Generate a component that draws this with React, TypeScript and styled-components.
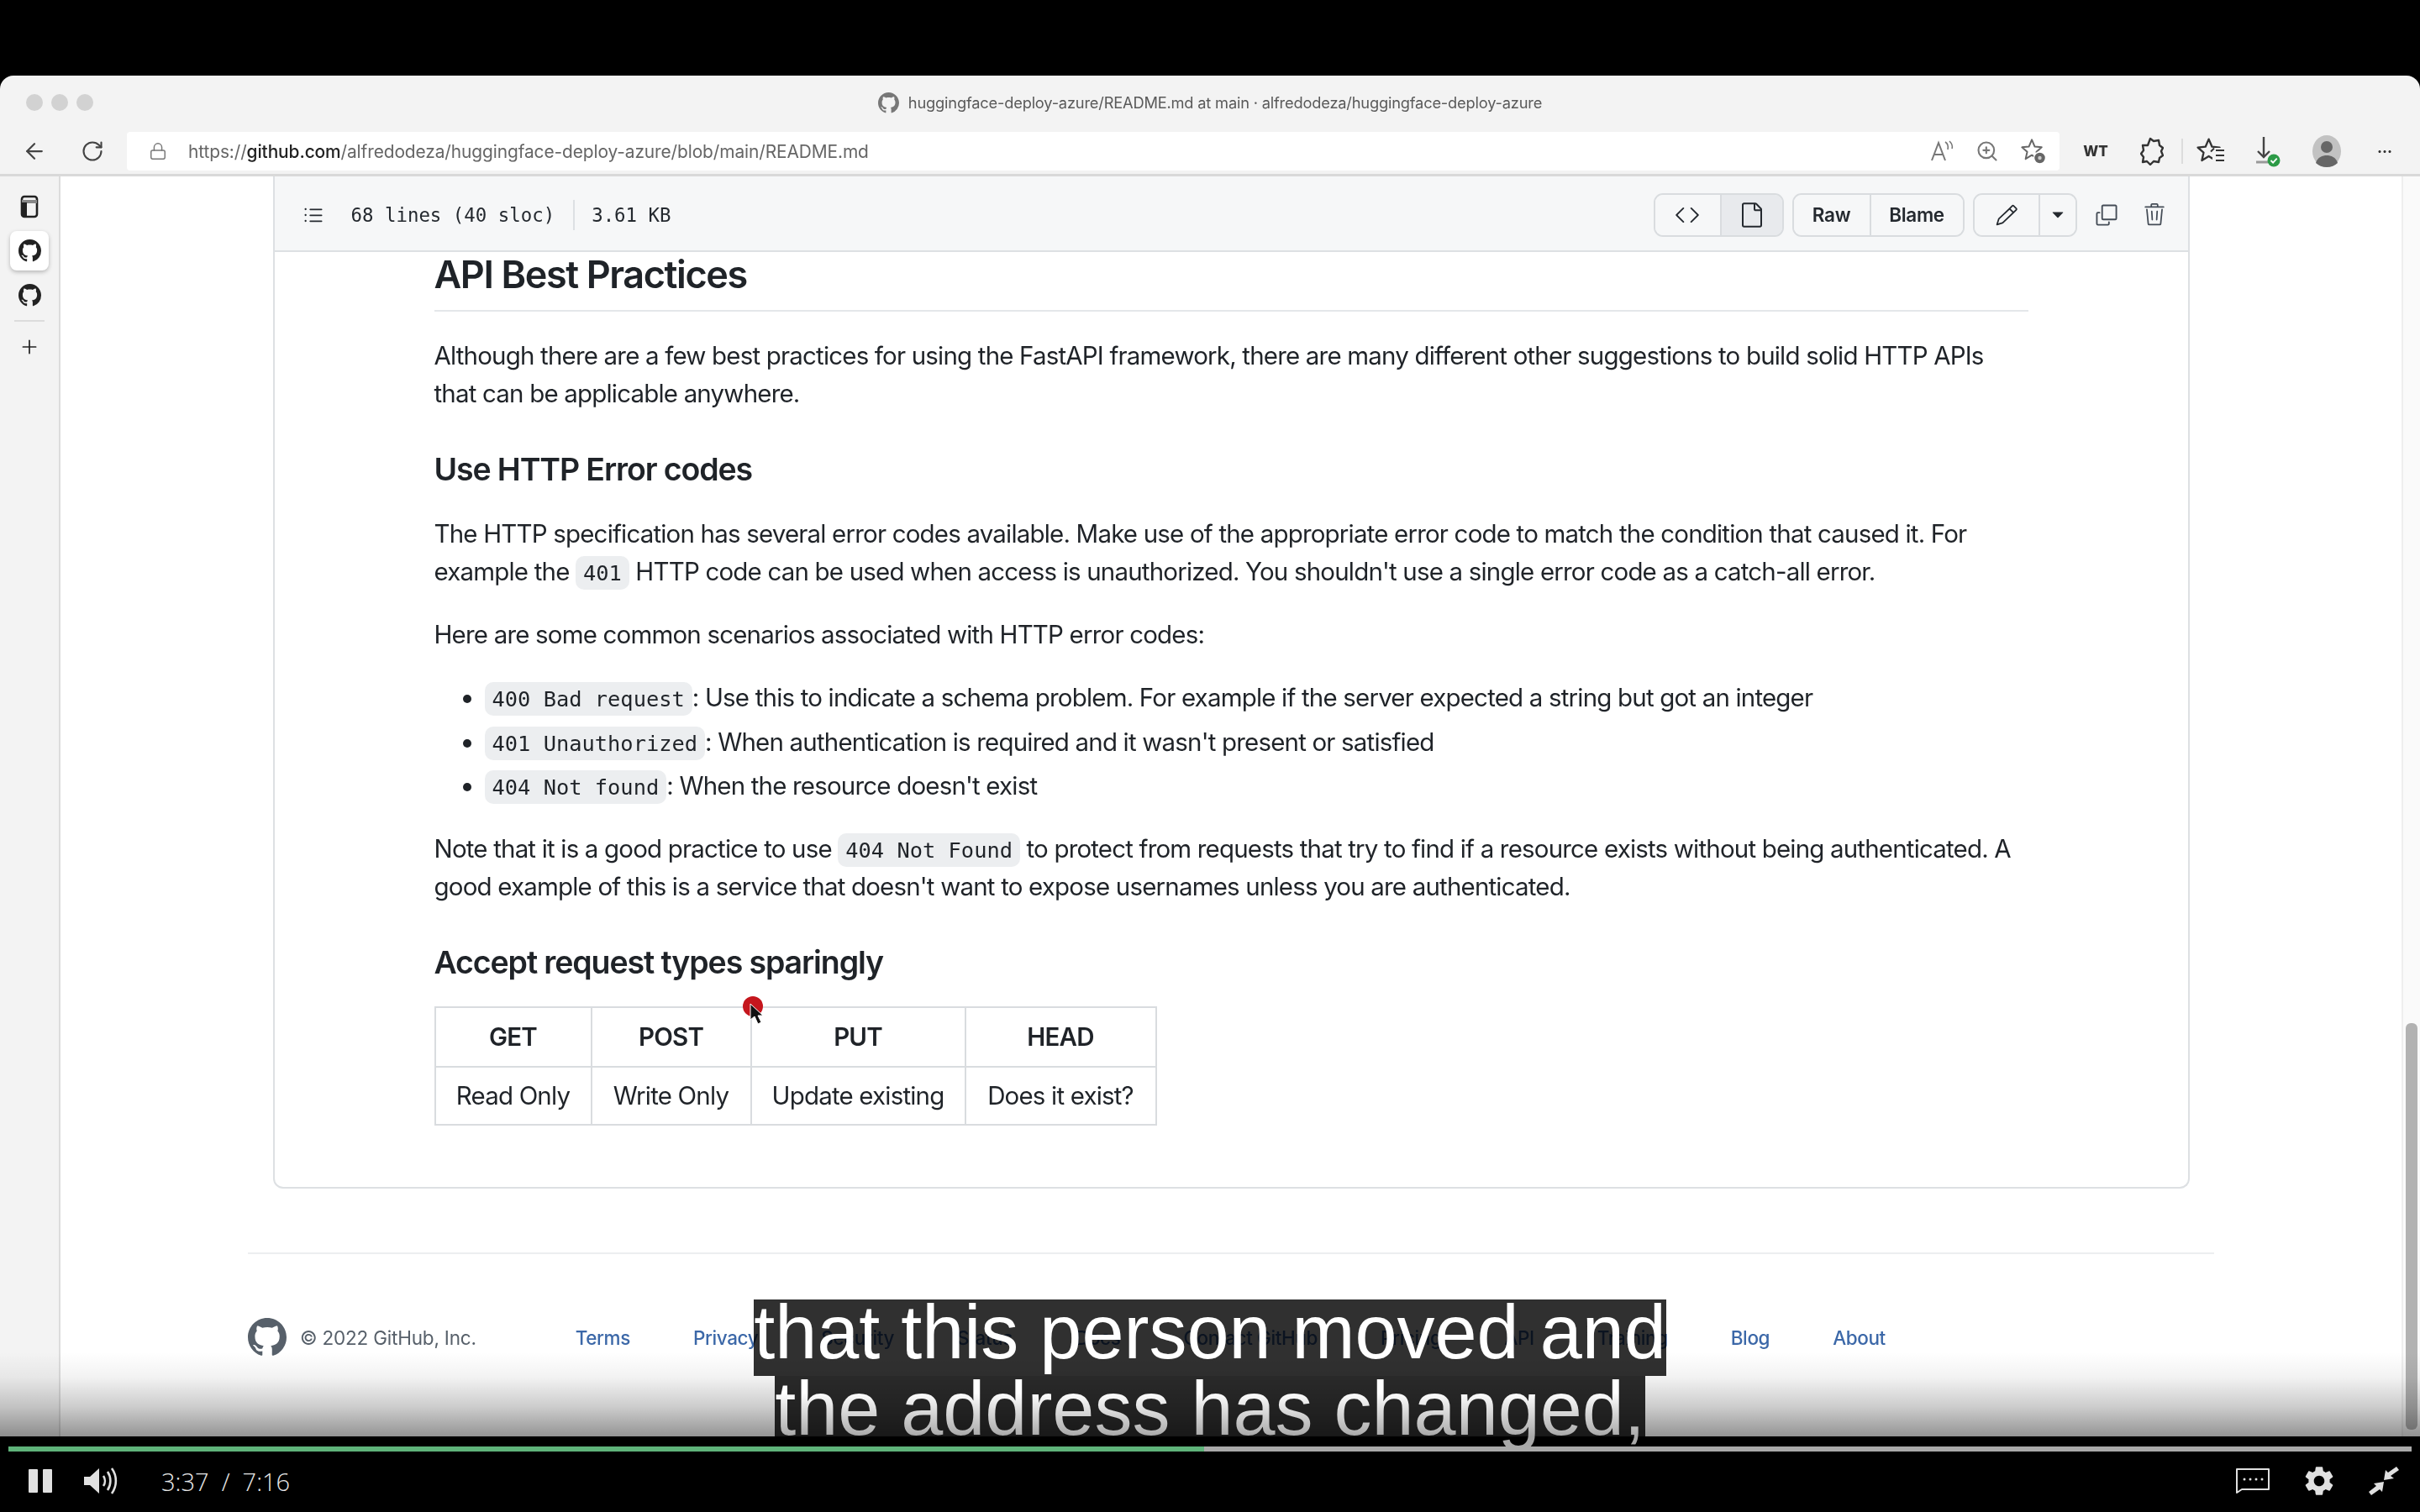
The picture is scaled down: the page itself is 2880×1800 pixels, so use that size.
// App.tsx
import React from 'react'
import styled, { createGlobalStyle } from 'styled-components'
import { ArrowLeft, RotateCw, ZoomIn, Plus, Lock } from 'lucide-react'
import {
  GoListUnordered,
  GoCode,
  GoFile,
  GoPencil,
  GoTriangleDown,
  GoCopy,
  GoTrash,
} from 'react-icons/go'
import { MdSettings } from 'react-icons/md'

const SANS = `Inter, "Liberation Sans", sans-serif`
const MONO = `"DejaVu Sans Mono", "Liberation Mono", monospace`
const LINE = '#dde0e3'

const GlobalStyle = createGlobalStyle`
  html, body { margin: 0; padding: 0; background: #000; }
  * { box-sizing: border-box; }
`

const Screen = styled.div`
  width: 2880px;
  height: 1800px;
  background: #000;
  display: flex;
  flex-direction: column;
  padding-top: 90px;
  overflow: hidden;
  font-family: ${SANS};
`

/* ---------- browser window ---------- */
const Browser = styled.div`
  position: relative;
  height: 1620px;
  display: flex;
  flex-direction: column;
`

const Chrome = styled.div`
  background: #f3f3f3;
  border-radius: 16px 16px 0 0;
  border-bottom: 3px solid #d9d9d9;
  filter: blur(0.6px);
`

const TitleBar = styled.div`
  height: 66px;
  display: grid;
  grid-template-columns: 1fr auto 1fr;
  align-items: center;
  padding: 0 31px 2px;
`

const Dots = styled.div`
  display: flex;
  gap: 10px;
`

const Dot = styled.span`
  width: 20px;
  height: 20px;
  border-radius: 50%;
  background: #d2d2d2;
`

const PageTitle = styled.div`
  display: flex;
  align-items: center;
  gap: 11px;
  font-size: 18.3px;
  letter-spacing: -0.2px;
  color: #5a5a5a;
  svg { color: #777; }
`

const ToolBar = styled.div`
  height: 51px;
  display: flex;
  align-items: flex-start;
  color: #444;
`

const NavIcons = styled.div`
  width: 151px;
  height: 47px;
  display: flex;
  align-items: center;
  gap: 40px;
  padding-left: 26px;
  flex: none;
`

const AddressBar = styled.div`
  width: 2300px;
  height: 46px;
  flex: none;
  margin-top: 1px;
  background: #fff;
  border-radius: 4px;
  display: flex;
  align-items: center;
  padding: 0 11px 0 26px;
  color: #777;
`

const Url = styled.div`
  margin-left: 25px;
  font-size: 20.9px;
  letter-spacing: -0.1px;
  color: #666;
  flex: 1;
  b { font-weight: 500; color: #222; }
`

const AddressIcons = styled.div`
  display: flex;
  align-items: center;
  gap: 25px;
  margin-right: 4px;
`

const ToolIcons = styled.div`
  height: 47px;
  display: flex;
  align-items: center;
  flex: 1;
`

const ToolSlot = styled.div<{ $w: number }>`
  width: ${p => p.$w}px;
  display: flex;
  justify-content: center;
  align-items: center;
  flex: none;
`

const Wt = styled.span`
  font-size: 17px;
  font-weight: 800;
  color: #333;
`

const ToolDivider = styled.span`
  width: 2px;
  height: 30px;
  background: #dcdcdc;
  flex: none;
`

const Body = styled.div`
  flex: 1;
  min-height: 0;
  display: flex;
  filter: blur(0.6px);
  overflow: hidden;
`

/* ---------- edge sidebar ---------- */
const SideBar = styled.div`
  width: 72px;
  flex: none;
  background: #f3f3f3;
  border-right: 2px solid #dcdcdc;
  display: flex;
  flex-direction: column;
  align-items: center;
  padding-top: 12px;
  gap: 6px;
  color: #222;
`

const SideItem = styled.div<{ $active?: boolean }>`
  width: 46px;
  height: 47px;
  flex: none;
  display: flex;
  align-items: center;
  justify-content: center;
  border-radius: 8px;
  background: ${p => (p.$active ? '#fff' : 'transparent')};
  box-shadow: ${p => (p.$active ? '0 2px 5px rgba(0,0,0,.25)' : 'none')};
`

const SideRule = styled.span`
  width: 36px;
  height: 2px;
  background: #dcdcdc;
  flex: none;
  margin-bottom: 11px;
`

/* ---------- github page ---------- */
const Main = styled.div`
  flex: 1;
  min-width: 0;
  background: #fff;
  display: flex;
  flex-direction: column;
  align-items: center;
  overflow: hidden;
`

const Card = styled.div`
  width: 2281px;
  flex: none;
  border: 2px solid ${LINE};
  border-top: 0;
  border-radius: 0 0 12px 12px;
`

const CardHeader = styled.div`
  height: 90px;
  background: #f6f7f8;
  border-bottom: 2px solid ${LINE};
  display: flex;
  align-items: center;
  padding: 3px 26px 0 32px;
  color: #24292f;
`

const FileMeta = styled.span`
  font-family: ${MONO};
  font-size: 22.4px;
  margin-left: 31px;
`

const MetaRule = styled.span`
  width: 2px;
  height: 36px;
  background: ${LINE};
  margin: 0 20px 0 22px;
`

const FileSize = styled(FileMeta)`
  margin-left: 0;
`

const HeaderActions = styled.div`
  margin-left: auto;
  display: flex;
  align-items: center;
  gap: 10px;
`

const BtnGroup = styled.div`
  height: 52px;
  display: flex;
  border: 2px solid #d9dcdf;
  border-radius: 11px;
  overflow: hidden;
`

const Btn = styled.div<{ $w: number; $on?: boolean }>`
  width: ${p => p.$w}px;
  display: flex;
  align-items: center;
  justify-content: center;
  font-size: 22.5px;
  font-weight: 600;
  letter-spacing: -0.3px;
  color: #24292f;
  background: ${p => (p.$on ? '#e8eaed' : '#f6f7f8')};
  & + & { border-left: 2px solid #d9dcdf; }
`

const PlainIcon = styled.span<{ $ml: number }>`
  display: flex;
  margin-left: ${p => p.$ml}px;
  color: #444c56;
`

const Markdown = styled.div`
  padding: 0 190px 73px;
  font-size: 29.5px;
  line-height: 45px;
  letter-spacing: -0.82px;
  color: #1f2328;
`

const H2 = styled.h2`
  margin: 0 0 30px;
  font-size: 45px;
  line-height: 54px;
  font-weight: 600;
  letter-spacing: -1.4px;
  padding-bottom: 15px;
  border-bottom: 2px solid #e4e7ea;
  color: #1f2328;
`

const H3 = styled.h3`
  margin: 45px 0 31px;
  font-size: 37.5px;
  line-height: 46px;
  font-weight: 600;
  letter-spacing: -1.12px;
  color: #1f2328;
`

const P = styled.p`
  margin: 0 0 30px;
`

const Code = styled.code`
  font-family: ${MONO};
  font-size: 25.4px;
  line-height: 1;
  letter-spacing: 0;
  padding: 5px 9px;
  background: rgba(175, 184, 193, 0.24);
  border-radius: 10px;
`

const List = styled.ul`
  margin: 0 0 30px;
  padding: 0 0 0 60px;
`

const Item = styled.li`
  margin-bottom: 7.5px;
`

const Table = styled.table`
  margin-top: -2px;
  border-collapse: collapse;
  table-layout: fixed;
  width: 858px;
`

const Cell = styled.td<{ $w?: number }>`
  border: 2px solid #d9dcdf;
  text-align: center;
  height: 69px;
  padding: 0;
  width: ${p => (p.$w ? `${p.$w}px` : 'auto')};
`

const HeadCell = styled(Cell).attrs({ as: 'th' })`
  font-weight: 600;
  height: 71px;
`

const Footer = styled.div`
  width: 2340px;
  flex: none;
  margin-top: 76px;
  border-top: 2px solid #eceef0;
  padding-top: 76px;
  display: flex;
  align-items: center;
  font-size: 22.5px;
  letter-spacing: -0.2px;
  color: #57606a;
`

const Copyright = styled.span`
  margin: 0 118px 0 16px;
`

const FooterLinks = styled.div`
  display: flex;
  gap: 75px;
  color: #3c68a8;
  font-weight: 500;
  letter-spacing: -0.4px;
`

const Rail = styled.div`
  width: 22px;
  flex: none;
  background: #fafafa;
  border-left: 2px solid #eeeeee;
  padding: 1008px 3px 8px;
`

const Thumb = styled.div`
  height: 484px;
  border-radius: 6px;
  background: #b2b2b2;
`

/* ---------- things lying over the video frame ---------- */
const BottomFade = styled.div`
  position: absolute;
  left: 0;
  right: 0;
  bottom: 0;
  height: 100px;
  pointer-events: none;
  background: linear-gradient(
    to bottom,
    rgba(0, 0, 0, 0) 0%,
    rgba(0, 0, 0, 0.05) 30%,
    rgba(0, 0, 0, 0.2) 65%,
    rgba(0, 0, 0, 0.42) 100%
  );
`

const PointerDot = styled.div`
  position: absolute;
  left: 884px;
  top: 1096px;
  width: 24px;
  height: 24px;
  border-radius: 50%;
  background: #c5161d;
  filter: blur(0.6px);
`

const PointerArrow = styled.svg`
  position: absolute;
  left: 892px;
  top: 1104px;
`

const Captions = styled.div`
  position: absolute;
  left: 0;
  right: 0;
  top: 1457px;
  display: flex;
  flex-direction: column;
  align-items: center;
  z-index: 2;
  font-family: "Liberation Sans", Arial, sans-serif;
  font-size: 90px;
  line-height: 79px;
  white-space: nowrap;
`

const CaptionTop = styled.div`
  height: 91px;
  background: rgba(0, 0, 0, 0.81);
  color: #fff;
`

const CaptionBottom = styled.div`
  height: 72px;
  background: rgba(0, 0, 0, 0.83);
`

const CaptionFadedText = styled.div`
  height: 100px;
  color: transparent;
  background: linear-gradient(to bottom, #fff 20px, #a8a8a8 72px);
  -webkit-background-clip: text;
  background-clip: text;
`

/* ---------- player controls ---------- */
const Player = styled.div`
  position: relative;
  z-index: 3;
  flex: 1;
  padding: 12px 10px 0;
`

const Progress = styled.div`
  height: 6px;
  background: #a9a9a9;
`

const Played = styled.div`
  height: 100%;
  background: #5fb37a;
`

const Controls = styled.div`
  display: flex;
  align-items: center;
  height: 70px;
  padding: 0 15px 0 24px;
  color: #e0e0e0;
`

const Time = styled.span`
  margin-left: 52px;
  font-family: "Open Sans", sans-serif;
  font-weight: 300;
  font-size: 29px;
  color: #e6e6e6;
  white-space: pre;
`

const RightControls = styled.div`
  margin-left: auto;
  display: flex;
  align-items: center;
  gap: 38px;
`

const VolumeSvg = styled.svg`
  margin-left: 38px;
`

const progress = (217 / 436) * 100
const STAR = '12,2 15,9 22,9.700 16.700,14.300 18.300,21.500 12,17.700 5.700,21.500 7.300,14.300 2,9.700 9,9'

const GithubMark = ({ size }: { size: number }) => (
  <svg width={size} height={size} viewBox="0 0 16 16" fill="currentColor">
    <path d="M8 0C3.58 0 0 3.58 0 8c0 3.54 2.29 6.53 5.47 7.59.4.07.55-.17.55-.38 0-.19-.01-.82-.01-1.49-2.01.37-2.53-.49-2.69-.94-.09-.23-.48-.94-.82-1.13-.28-.15-.68-.52-.01-.53.63-.01 1.08.58 1.23.82.72 1.21 1.87.87 2.33.66.07-.52.28-.87.51-1.07-1.78-.2-3.64-.89-3.64-3.95 0-.87.31-1.59.82-2.15-.08-.2-.36-1.02.08-2.12 0 0 .67-.21 2.2.82.64-.18 1.32-.27 2-.27.68 0 1.36.09 2 .27 1.53-1.04 2.2-.82 2.2-.82.44 1.1.16 1.92.08 2.12.51.56.82 1.27.82 2.15 0 3.07-1.87 3.75-3.65 3.95.29.25.54.73.54 1.48 0 1.07-.01 1.93-.01 2.2 0 .21.15.46.55.38A8.013 8.013 0 0016 8c0-4.42-3.58-8-8-8z" />
  </svg>
)

const TabsIcon = () => (
  <svg width="22" height="28" viewBox="0 0 22 28" fill="none" stroke="#222" strokeWidth="2.600">
    <rect x="2" y="2" width="18" height="24" rx="3" />
    <path d="M2 8h18" stroke="#888" strokeWidth="4" />
    <rect x="2" y="9" width="6" height="16" fill="#222" stroke="none" />
  </svg>
)

const ReadAloudIcon = () => (
  <svg width="30" height="30" viewBox="0 0 30 30" fill="none" stroke="#777" strokeWidth="2">
    <path d="M3 26 11 5l8 21M6 19h10" />
    <path d="M19 4c3 2 4 5 3 9M24 3c3 3 4 6 3 9" strokeWidth="1.600" />
  </svg>
)

const FavAddIcon = () => (
  <svg width="32" height="32" viewBox="0 0 32 32" fill="none">
    <polygon points={STAR} transform="scale(1.17)" stroke="#666" strokeWidth="1.700" strokeLinejoin="round" />
    <circle cx="23.500" cy="24" r="7" fill="#666" stroke="#fff" strokeWidth="1.500" />
    <circle cx="23.500" cy="24" r="2.200" fill="#ccc" />
  </svg>
)

const ExtensionIcon = () => (
  <svg width="28" height="34" viewBox="0 0 28 34" fill="none" stroke="#333" strokeWidth="2.400" strokeLinejoin="round">
    <path d="M12 2l4 3 6-1 1 6 4 3-2 4 2 5-4 3-1 5-6-1-4 4-4-4-5 1 1-6-3-4 3-4-1-6 6 0z" />
  </svg>
)

const FavoritesIcon = () => (
  <svg width="40" height="34" viewBox="0 0 40 34" fill="none">
    <polygon points={STAR} transform="scale(1.300)" stroke="#333" strokeWidth="1.800" strokeLinejoin="round" />
    <rect x="20" y="13" width="20" height="20" fill="#f3f3f3" />
    <path d="M24 16h10M24 22h10M24 28h10" stroke="#333" strokeWidth="2.200" />
    <path d="M22 13.500l-4 4" stroke="#333" strokeWidth="2" />
  </svg>
)

const DownloadIcon = () => (
  <svg width="40" height="40" viewBox="0 0 40 40" fill="none" stroke="#444" strokeWidth="2.400">
    <path d="M15 3v24M8 20l7 7 7-7" />
    <path d="M6 33h14" stroke="#999" strokeWidth="3" />
    <circle cx="27" cy="31" r="7.500" fill="#2c9a46" stroke="none" />
    <path d="M23.500 31l2.600 2.600 4.600-5" stroke="#fff" strokeWidth="1.800" />
  </svg>
)

const AvatarIcon = () => (
  <svg width="34" height="38" viewBox="0 0 34 38">
    <ellipse cx="17" cy="19" rx="17" ry="19" fill="#c2c2c2" />
    <circle cx="17" cy="14" r="7" fill="#666" />
    <path d="M4 33c2-7 8-9 13-9s11 2 13 9c-3 3-8 5-13 5S7 36 4 33z" fill="#666" />
  </svg>
)

const PauseIcon = () => (
  <svg width="28" height="28" viewBox="0 0 28 28" fill="#e0e0e0">
    <rect x="0" y="0" width="11" height="28" rx="1" />
    <rect x="17" y="0" width="11" height="28" rx="1" />
  </svg>
)

const VolumeIcon = () => (
  <VolumeSvg width="40" height="34" viewBox="0 0 40 34" fill="none">
    <path d="M0 12h7L18 2v30L7 22H0z" fill="#e0e0e0" />
    <path d="M23 11c2.500 3.500 2.500 8.500 0 12M28 6c4.500 6.500 4.500 15.500 0 22M33 2c6.500 9 6.500 21 0 30" stroke="#e0e0e0" strokeWidth="2.600" />
  </VolumeSvg>
)

const CaptionsIcon = () => (
  <svg width="40" height="30" viewBox="0 0 40 30" fill="none">
    <path d="M1 1h38v24H7l-6 4z" stroke="#e0e0e0" strokeWidth="2" strokeLinejoin="round" />
    <g fill="#e0e0e0">
      <circle cx="10" cy="13" r="1.500" />
      <circle cx="17" cy="13" r="1.500" />
      <circle cx="24" cy="13" r="1.500" />
      <circle cx="31" cy="13" r="1.500" />
    </g>
  </svg>
)

const ExitFullIcon = () => (
  <svg width="36" height="34" viewBox="0 0 36 34" fill="#e0e0e0">
    <path d="M33 0l3 4-10 7 4 3-12 2 2-12 3 3z" />
    <path d="M3 34l-3-4 9-7-3-3 12-2-2 12-3-3z" />
  </svg>
)

const App: React.FC = () => {
  return (
    <>
      <GlobalStyle />
      <Screen>
        <Browser>
          <Chrome>
            <TitleBar>
              <Dots>
                <Dot />
                <Dot />
                <Dot />
              </Dots>
              <PageTitle>
                <GithubMark size={25} />
                huggingface-deploy-azure/README.md at main · alfredodeza/huggingface-deploy-azure
              </PageTitle>
            </TitleBar>
            <ToolBar>
              <NavIcons>
                <ArrowLeft size={30} strokeWidth={1.8} />
                <RotateCw size={28} strokeWidth={1.8} />
              </NavIcons>
              <AddressBar>
                <Lock size={22} strokeWidth={1.6} />
                <Url>
                  https://<b>github.com</b>/alfredodeza/huggingface-deploy-azure/blob/main/README.md
                </Url>
                <AddressIcons>
                  <ReadAloudIcon />
                  <ZoomIn size={28} strokeWidth={1.8} color="#777" />
                  <FavAddIcon />
                </AddressIcons>
              </AddressBar>
              <ToolIcons>
                <ToolSlot $w={86}>
                  <Wt>WT</Wt>
                </ToolSlot>
                <ToolSlot $w={48}>
                  <ExtensionIcon />
                </ToolSlot>
                <ToolSlot $w={24}>
                  <ToolDivider />
                </ToolSlot>
                <ToolSlot $w={48}>
                  <FavoritesIcon />
                </ToolSlot>
                <ToolSlot $w={84}>
                  <DownloadIcon />
                </ToolSlot>
                <ToolSlot $w={56}>
                  <AvatarIcon />
                </ToolSlot>
                <ToolSlot $w={82}>
                  <Wt>···</Wt>
                </ToolSlot>
              </ToolIcons>
            </ToolBar>
          </Chrome>
          <Body>
            <SideBar>
              <SideItem>
                <TabsIcon />
              </SideItem>
              <SideItem $active>
                <GithubMark size={27} />
              </SideItem>
              <SideItem>
                <GithubMark size={27} />
              </SideItem>
              <SideRule />
              <Plus size={26} strokeWidth={1.6} />
            </SideBar>
            <Main>
              <Card>
                <CardHeader>
                  <GoListUnordered size={28} />
                  <FileMeta>68 lines (40 sloc)</FileMeta>
                  <MetaRule />
                  <FileSize>3.61 KB</FileSize>
                  <HeaderActions>
                    <BtnGroup>
                      <Btn $w={77}>
                        <GoCode size={30} />
                      </Btn>
                      <Btn $w={74} $on>
                        <GoFile size={32} />
                      </Btn>
                    </BtnGroup>
                    <BtnGroup>
                      <Btn $w={90}>Raw</Btn>
                      <Btn $w={111}>Blame</Btn>
                    </BtnGroup>
                    <BtnGroup>
                      <Btn $w={76}>
                        <GoPencil size={28} />
                      </Btn>
                      <Btn $w={44}>
                        <GoTriangleDown size={24} />
                      </Btn>
                    </BtnGroup>
                    <PlainIcon $ml={10}>
                      <GoCopy size={30} />
                    </PlainIcon>
                    <PlainIcon $ml={18}>
                      <GoTrash size={28} />
                    </PlainIcon>
                  </HeaderActions>
                </CardHeader>
                <Markdown>
                  <H2>API Best Practices</H2>
                  <P>
                    Although there are a few best practices for using the FastAPI framework, there are many different other suggestions to build solid HTTP APIs that can be applicable anywhere.
                  </P>
                  <H3>Use HTTP Error codes</H3>
                  <P>
                    The HTTP specification has several error codes available. Make use of the appropriate error code to match the condition that caused it. For example the <Code>401</Code> HTTP code can be used when access is unauthorized. You shouldn't use a single error code as a catch-all error.
                  </P>
                  <P>Here are some common scenarios associated with HTTP error codes:</P>
                  <List>
                    <Item>
                      <Code>400 Bad request</Code>: Use this to indicate a schema problem. For example if the server expected a string but got an integer
                    </Item>
                    <Item>
                      <Code>401 Unauthorized</Code>: When authentication is required and it wasn't present or satisfied
                    </Item>
                    <Item>
                      <Code>404 Not found</Code>: When the resource doesn't exist
                    </Item>
                  </List>
                  <P>
                    Note that it is a good practice to use <Code>404 Not Found</Code> to protect from requests that try to find if a resource exists without being authenticated. A good example of this is a service that doesn't want to expose usernames unless you are authenticated.
                  </P>
                  <H3>Accept request types sparingly</H3>
                  <Table>
                    <thead>
                      <tr>
                        <HeadCell $w={186}>GET</HeadCell>
                        <HeadCell $w={190}>POST</HeadCell>
                        <HeadCell $w={255}>PUT</HeadCell>
                        <HeadCell $w={227}>HEAD</HeadCell>
                      </tr>
                    </thead>
                    <tbody>
                      <tr>
                        <Cell>Read Only</Cell>
                        <Cell>Write Only</Cell>
                        <Cell>Update existing</Cell>
                        <Cell>Does it exist?</Cell>
                      </tr>
                    </tbody>
                  </Table>
                </Markdown>
              </Card>
              <Footer>
                <GithubMark size={46} />
                <Copyright>© 2022 GitHub, Inc.</Copyright>
                <FooterLinks>
                  <span>Terms</span>
                  <span>Privacy</span>
                  <span>Security</span>
                  <span>Status</span>
                  <span>Docs</span>
                  <span>Contact GitHub</span>
                  <span>Pricing</span>
                  <span>API</span>
                  <span>Training</span>
                  <span>Blog</span>
                  <span>About</span>
                </FooterLinks>
              </Footer>
            </Main>
            <Rail>
              <Thumb />
            </Rail>
          </Body>
          <PointerDot />
          <PointerArrow width="18" height="26" viewBox="0 0 18 26">
            <path d="M1 1v19l5-4 4 9 4-2-4-8h6z" fill="#111" stroke="#fff" strokeWidth="1" />
          </PointerArrow>
          <BottomFade />
          <Captions>
            <CaptionTop>that this person moved and</CaptionTop>
            <CaptionBottom>
              <CaptionFadedText>the address has changed,</CaptionFadedText>
            </CaptionBottom>
          </Captions>
        </Browser>
        <Player>
          <Progress>
            <Played style={{ width: `${progress}%` }} />
          </Progress>
          <Controls>
            <PauseIcon />
            <VolumeIcon />
            <Time>3:37  /  7:16</Time>
            <RightControls>
              <CaptionsIcon />
              <MdSettings size={42} />
              <ExitFullIcon />
            </RightControls>
          </Controls>
        </Player>
      </Screen>
    </>
  )
}

export default App
